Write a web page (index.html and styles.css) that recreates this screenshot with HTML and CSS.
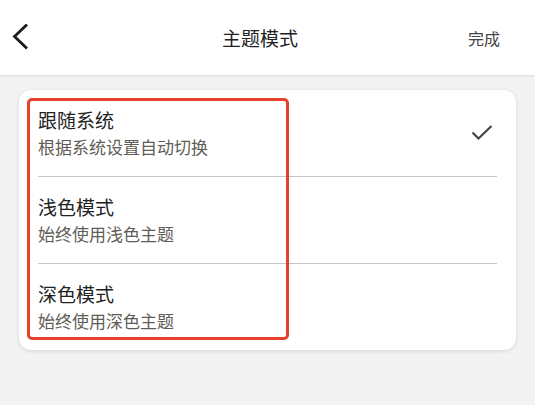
FILE: index.html
```html
<!DOCTYPE html>
<html lang="zh-CN">
<head>
<meta charset="utf-8">
<title>主题模式</title>
<link rel="stylesheet" href="styles.css">
</head>
<body>
<header class="topbar">
  <div class="back">
    <svg width="20" height="28" viewBox="0 0 20 28"><path d="M14 1.5 L2.5 12.5 L14 23.5" fill="none" stroke="#1c1c1c" stroke-width="2.8" stroke-linecap="square" stroke-linejoin="miter"/></svg>
  </div>
  <div class="title">主题模式</div>
  <div class="done">完成</div>
</header>
<main class="content">
  <section class="card">
    <div class="row">
      <div class="texts">
        <div class="row-title">跟随系统</div>
        <div class="row-sub">根据系统设置自动切换</div>
      </div>
      <svg class="check" width="22" height="16" viewBox="0 0 22 16"><path d="M1.5 7.5 L7.5 13.5 L20.5 1" fill="none" stroke="#4a443d" stroke-width="2.2"/></svg>
    </div>
    <div class="divider"></div>
    <div class="row">
      <div class="texts">
        <div class="row-title">浅色模式</div>
        <div class="row-sub">始终使用浅色主题</div>
      </div>
    </div>
    <div class="divider"></div>
    <div class="row">
      <div class="texts">
        <div class="row-title">深色模式</div>
        <div class="row-sub">始终使用深色主题</div>
      </div>
    </div>
    <div class="highlight"></div>
  </section>
</main>
</body>
</html>
```
FILE: styles.css
```css
* { box-sizing: border-box; }
html, body {
  margin: 0;
  padding: 0;
  background: #f3f3f3;
  font-family: "Noto Sans CJK SC", "Noto Sans", sans-serif;
}
body { width: 535px; height: 405px; overflow: hidden; }

.topbar {
  height: 75px;
  background: #fff;
  display: flex;
  align-items: center;
  box-shadow: 0 1px 3px rgba(0,0,0,0.10);
  position: relative;
  z-index: 1;
}
.back {
  width: 52px;
  padding-left: 12px;
  padding-top: 1px;
  display: flex;
  align-items: center;
}
.back svg { display: block; }
.title {
  flex: 1;
  text-align: center;
  font-size: 19px;
  color: #222;
  line-height: 26px;
}
.done {
  font-size: 16px;
  color: #444;
  padding-right: 35px;
  line-height: 22px;
}

.content { padding: 15px 19px 0 19px; }

.card {
  position: relative;
  background: #fff;
  border-radius: 12px;
  box-shadow: 0 1px 4px rgba(0,0,0,0.13);
}
.row {
  display: flex;
  align-items: center;
  padding: 17px 23px 17px 19px;
}
.row:last-of-type { padding-bottom: 16px; }
.texts { flex: 1; }
.row-title {
  font-size: 19px;
  line-height: 26px;
  color: #222;
}
.row-sub {
  margin-top: 2px;
  font-size: 17px;
  line-height: 24px;
  color: #625c56;
}
.check { display: block; }
.divider {
  height: 1px;
  background: #c4c4c4;
  margin: 0 19px;
}
.highlight {
  position: absolute;
  left: 8px;
  top: 8px;
  width: 262px;
  height: 242px;
  border: 3px solid #e6402a;
  border-radius: 5px;
  pointer-events: none;
}
```
